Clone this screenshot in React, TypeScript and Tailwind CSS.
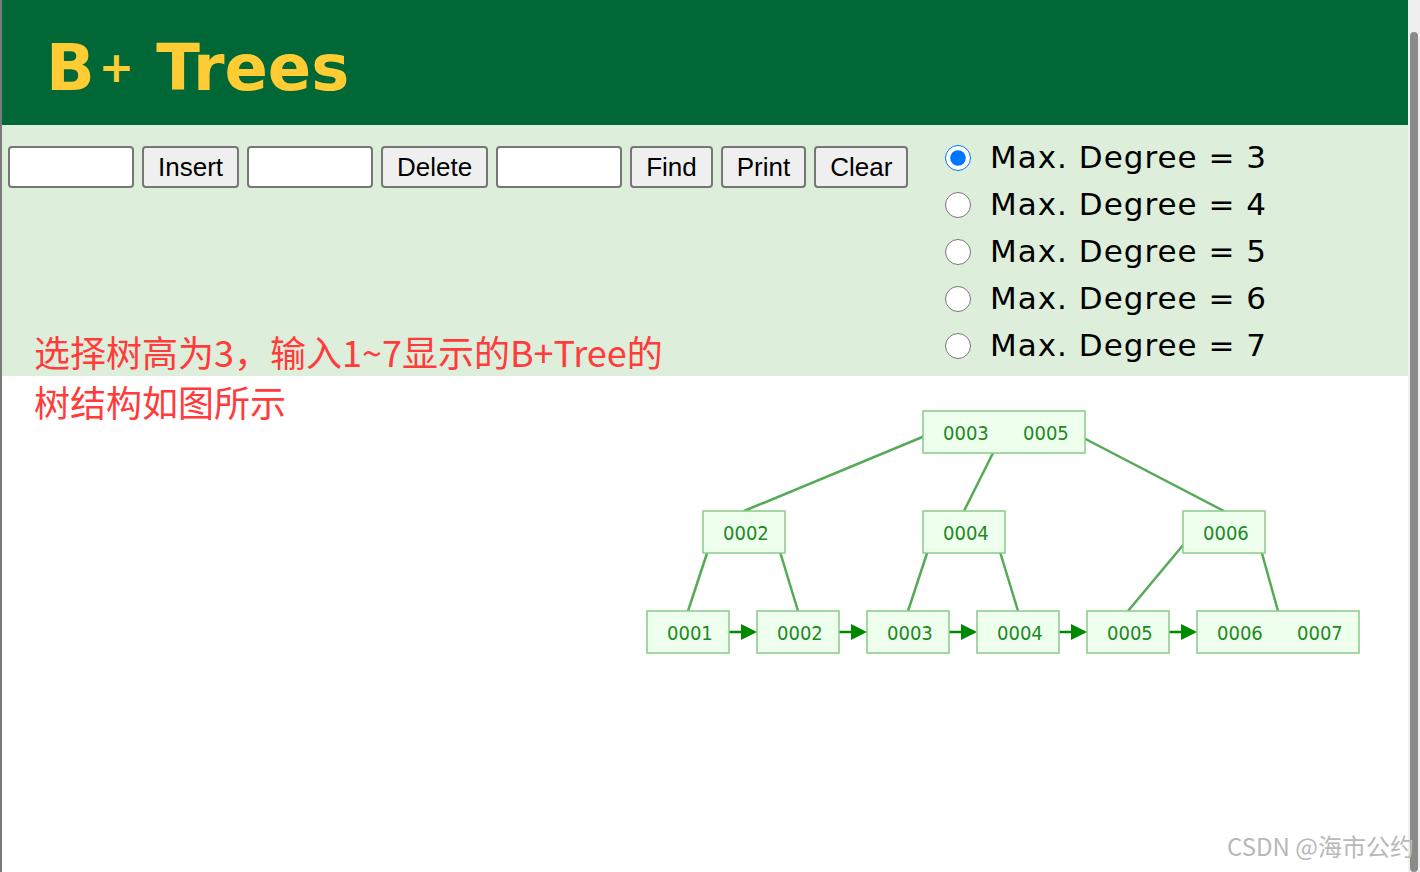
const Node = ({ x, y, w, keys }: { x: number; y: number; w: number; keys: string[] }) => (
  <g>
    <rect x={x} y={y} width={w} height={42} fill="#eeffee" stroke="#88cc88" strokeWidth={1.5} />
    {keys.map((k, i) => (
      <text key={k + i} x={x + 20 + i * 80} y={y + 29} fill="#228822" fontSize={20} fontFamily="'DejaVu Sans Condensed','DejaVu Sans',sans-serif">
        {k}
      </text>
    ))}
  </g>
);

const Tree = () => {
  const line = "#55aa55";
  const leaves = [
    { x: 645, k: ["0001"] },
    { x: 755, k: ["0002"] },
    { x: 865, k: ["0003"] },
    { x: 975, k: ["0004"] },
    { x: 1085, k: ["0005"] },
    { x: 1195, k: ["0006", "0007"] },
  ];
  return (
    <svg width="1420" height="300" viewBox="0 380 1420 300" className="block">
      <g stroke={line} strokeWidth={2.5}>
        <line x1={930} y1={437} x2={742} y2={515} />
        <line x1={1002} y1={435} x2={962} y2={515} />
        <line x1={1072} y1={437} x2={1222} y2={515} />
        <line x1={712} y1={536} x2={686} y2={615} />
        <line x1={772} y1={536} x2={796} y2={615} />
        <line x1={932} y1={536} x2={906} y2={615} />
        <line x1={992} y1={536} x2={1016} y2={615} />
        <line x1={1192} y1={536} x2={1126} y2={615} />
        <line x1={1254} y1={536} x2={1276} y2={615} />
      </g>
      {leaves.slice(0, 5).map((l) => (
        <g key={l.x} stroke="#008800" fill="#008800">
          <line x1={l.x + 72} y1={636} x2={l.x + 100} y2={636} strokeWidth={2.5} />
          <polygon points={`${l.x + 94},628 ${l.x + 110},636 ${l.x + 94},644`} stroke="none" />
        </g>
      ))}
      <Node x={921} y={415} w={162} keys={["0003", "0005"]} />
      <Node x={701} y={515} w={82} keys={["0002"]} />
      <Node x={921} y={515} w={82} keys={["0004"]} />
      <Node x={1181} y={515} w={82} keys={["0006"]} />
      {leaves.map((l) => (
        <Node key={l.x} x={l.x} y={615} w={l.k.length > 1 ? 162 : 82} keys={l.k} />
      ))}
    </svg>
  );
};

export default function App() {
  const btn = "h-[42px] px-[14px] rounded-[4px] border-2 border-[#767676] bg-[#efefef] text-[26px] text-black";
  const inp = "h-[42px] w-[126px] rounded-[4px] border-2 border-[#767676] bg-white";
  return (
    <div className="relative w-[1420px] h-[872px] overflow-hidden bg-white border-l-2 border-[#7a7a7a]" style={{ fontFamily: "'Liberation Sans', Arial, sans-serif" }}>
      <div className="w-[1406px]">
        <div className="h-[125px] bg-[#006837] flex items-center pl-[44px]">
          <h1 className="text-[#ffcc33] text-[64px] font-bold leading-none pt-[10px]" style={{ fontFamily: "'DejaVu Sans', Verdana, sans-serif" }}>
            B<sup className="text-[42px] relative -top-[8px] ml-[4px]">+</sup> Trees
          </h1>
        </div>
        <div className="h-[251px] bg-[#ddeedb] flex">
          <div className="flex items-start gap-[8px] pl-[6px] pt-[21px] w-[930px]">
            <input className={inp} />
            <button className={btn}>Insert</button>
            <input className={inp} />
            <button className={btn}>Delete</button>
            <input className={inp} />
            <button className={btn}>Find</button>
            <button className={btn}>Print</button>
            <button className={btn}>Clear</button>
          </div>
          <div className="flex flex-col pt-[134px-0] pt-[133px] hidden" />
          <div className="flex flex-col pt-[135px]" />
          <div className="flex flex-col pt-[136px]" />
          <div className="flex flex-col pt-[137px] hidden" />
          <div className="flex flex-col pt-[136px] hidden" />
          <div className="flex flex-col absolute left-[942px] top-[134px]">
            {[3, 4, 5, 6, 7].map((d) => (
              <label key={d} className="flex items-center h-[47px] text-[31px] text-black" style={{ fontFamily: "'DejaVu Sans', Verdana, sans-serif" }}>
                <input type="radio" name="deg" defaultChecked={d === 3} className="w-[26px] h-[26px] mr-[19px] ml-[1px] accent-[#0075ff]" />
                <span className="tracking-[1px]">Max. Degree = {d}</span>
              </label>
            ))}
          </div>
        </div>
        <Tree />
      </div>
      <p className="absolute left-[32px] top-[326px] text-[#ff3b3b] text-[36px] leading-[50px]" style={{ fontFamily: "'Noto Sans CJK SC', sans-serif" }}>
        选择树高为3，输入1~7显示的B+Tree的
        <br />
        树结构如图所示
      </p>
      <div className="absolute right-0 top-0 w-[12px] h-[872px] bg-[#f0f0f0]">
        <div className="mx-auto mt-[32px] w-[8px] h-[840px] rounded-full bg-[#8a8a8a]" />
      </div>
      <p className="absolute right-[6px] bottom-[8px] text-[#b8b8b8] text-[24px]" style={{ fontFamily: "'Noto Sans CJK SC', sans-serif" }}>
        CSDN @海市公约
      </p>
    </div>
  );
}
